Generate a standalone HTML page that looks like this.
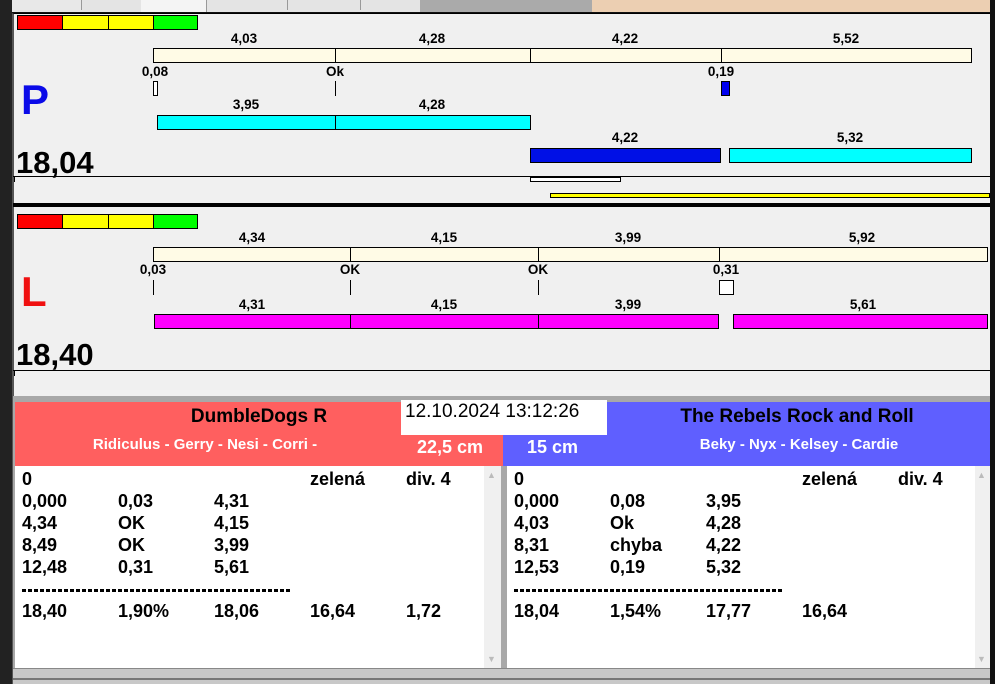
<!DOCTYPE html>
<html><head><meta charset="utf-8"><style>
*{margin:0;padding:0;box-sizing:border-box}
body{width:995px;height:684px;overflow:hidden;background:#111;font-family:"Liberation Sans",Arial,sans-serif;position:relative}
.a{position:absolute}
.t{position:absolute;font-weight:bold;font-size:13.5px;color:#000;transform:translateX(-50%);white-space:nowrap;line-height:14px}
.b{position:absolute;border:1px solid #000}
.r{position:absolute;font-weight:bold;font-size:18px;line-height:20px;color:#000;white-space:nowrap}
.d{position:absolute;height:3px;background:repeating-linear-gradient(90deg,#000 0 4px,transparent 4px 6px)}
</style></head><body>
<div class="a" style="left:0;top:0;width:12px;height:684px;background:#222"></div>
<div class="a" style="left:12px;top:0;width:408px;height:12px;background:#e4e4e4"></div>
<div class="a" style="left:12px;top:0;width:70px;height:10px;background:#e8e8e8;border-right:1px solid #999"></div>
<div class="a" style="left:141px;top:0;width:66px;height:12px;background:#f4f4f4;border-right:1px solid #999"></div>
<div class="a" style="left:287px;top:0;width:1px;height:10px;background:#999"></div>
<div class="a" style="left:360px;top:0;width:1px;height:10px;background:#999"></div>
<div class="a" style="left:420px;top:0;width:172px;height:12px;background:#aaa"></div>
<div class="a" style="left:592px;top:0;width:398px;height:12px;background:#eccfb2"></div>
<div class="a" style="left:990px;top:0;width:5px;height:684px;background:#111"></div>

<div class="a" style="left:12px;top:13px;width:978px;height:671px;background:#f0f0f0;border-left:2px solid #555;border-top:1px solid #000"></div>

<div class="b" style="left:17px;top:15px;width:46px;height:15px;background:#f00"></div>
<div class="b" style="left:62px;top:15px;width:47px;height:15px;background:#ff0"></div>
<div class="b" style="left:108px;top:15px;width:46px;height:15px;background:#ff0"></div>
<div class="b" style="left:153px;top:15px;width:45px;height:15px;background:#0f0"></div>

<div class="t" style="left:244px;top:32px">4,03</div>
<div class="t" style="left:432px;top:32px">4,28</div>
<div class="t" style="left:625px;top:32px">4,22</div>
<div class="t" style="left:846px;top:32px">5,52</div>
<div class="b" style="left:153px;top:48px;width:183px;height:15px;background:#fffbe6"></div>
<div class="b" style="left:335px;top:48px;width:196px;height:15px;background:#fffbe6"></div>
<div class="b" style="left:530px;top:48px;width:192px;height:15px;background:#fffbe6"></div>
<div class="b" style="left:721px;top:48px;width:251px;height:15px;background:#fffbe6"></div>
<div class="t" style="left:155px;top:65px">0,08</div>
<div class="t" style="left:335px;top:65px">Ok</div>
<div class="t" style="left:721px;top:65px">0,19</div>
<div class="b" style="left:153px;top:81px;width:5px;height:15px;background:#fff"></div>
<div class="a" style="left:335px;top:81px;width:1px;height:15px;background:#000"></div>
<div class="b" style="left:721px;top:81px;width:9px;height:15px;background:#0000f0"></div>
<div class="a" style="left:21px;top:78px;font-size:42px;font-weight:bold;color:#0a0ae8;line-height:44px">P</div>
<div class="t" style="left:246px;top:98px">3,95</div>
<div class="t" style="left:432px;top:98px">4,28</div>
<div class="b" style="left:157px;top:115px;width:179px;height:15px;background:#0ff"></div>
<div class="b" style="left:335px;top:115px;width:196px;height:15px;background:#0ff"></div>
<div class="t" style="left:625px;top:131px">4,22</div>
<div class="t" style="left:850px;top:131px">5,32</div>
<div class="b" style="left:530px;top:148px;width:191px;height:15px;background:#0010e6"></div>
<div class="b" style="left:729px;top:148px;width:243px;height:15px;background:#0ff"></div>
<div class="a" style="left:16px;top:146px;font-size:31px;font-weight:bold;line-height:34px">18,04</div>
<div class="a" style="left:13px;top:176px;width:977px;height:1px;background:#000"></div>
<div class="a" style="left:14px;top:176px;width:1px;height:6px;background:#000"></div>
<div class="b" style="left:530px;top:177px;width:91px;height:5px;background:#fff"></div>
<div class="b" style="left:550px;top:193px;width:440px;height:5px;background:#ff0"></div>
<div class="a" style="left:13px;top:203px;width:977px;height:4px;background:#000"></div>

<div class="b" style="left:17px;top:214px;width:46px;height:15px;background:#f00"></div>
<div class="b" style="left:62px;top:214px;width:47px;height:15px;background:#ff0"></div>
<div class="b" style="left:108px;top:214px;width:46px;height:15px;background:#ff0"></div>
<div class="b" style="left:153px;top:214px;width:45px;height:15px;background:#0f0"></div>
<div class="t" style="left:252px;top:231px">4,34</div>
<div class="t" style="left:444px;top:231px">4,15</div>
<div class="t" style="left:628px;top:231px">3,99</div>
<div class="t" style="left:862px;top:231px">5,92</div>
<div class="b" style="left:153px;top:247px;width:198px;height:15px;background:#fffbe6"></div>
<div class="b" style="left:350px;top:247px;width:189px;height:15px;background:#fffbe6"></div>
<div class="b" style="left:538px;top:247px;width:182px;height:15px;background:#fffbe6"></div>
<div class="b" style="left:719px;top:247px;width:269px;height:15px;background:#fffbe6"></div>
<div class="t" style="left:153px;top:263px">0,03</div>
<div class="t" style="left:350px;top:263px">OK</div>
<div class="t" style="left:538px;top:263px">OK</div>
<div class="t" style="left:726px;top:263px">0,31</div>
<div class="a" style="left:153px;top:280px;width:1px;height:15px;background:#000"></div>
<div class="a" style="left:350px;top:280px;width:1px;height:15px;background:#000"></div>
<div class="a" style="left:538px;top:280px;width:1px;height:15px;background:#000"></div>
<div class="b" style="left:719px;top:280px;width:15px;height:15px;background:#fff"></div>
<div class="a" style="left:21px;top:270px;font-size:42px;font-weight:bold;color:#f01010;line-height:44px">L</div>
<div class="t" style="left:252px;top:298px">4,31</div>
<div class="t" style="left:444px;top:298px">4,15</div>
<div class="t" style="left:628px;top:298px">3,99</div>
<div class="t" style="left:863px;top:298px">5,61</div>
<div class="b" style="left:154px;top:314px;width:197px;height:15px;background:#f0f"></div>
<div class="b" style="left:350px;top:314px;width:189px;height:15px;background:#f0f"></div>
<div class="b" style="left:538px;top:314px;width:181px;height:15px;background:#f0f"></div>
<div class="b" style="left:733px;top:314px;width:255px;height:15px;background:#f0f"></div>
<div class="a" style="left:16px;top:338px;font-size:31px;font-weight:bold;line-height:34px">18,40</div>
<div class="a" style="left:13px;top:370px;width:977px;height:1px;background:#000"></div>
<div class="a" style="left:14px;top:370px;width:1px;height:6px;background:#000"></div>

<div class="a" style="left:13px;top:396px;width:977px;height:288px;background:#a8a8a8"></div>
<div class="a" style="left:15px;top:402px;width:488px;height:64px;background:#ff5f5f"></div>
<div class="a" style="left:503px;top:402px;width:487px;height:64px;background:#5f5fff"></div>
<div class="a" style="left:401px;top:400px;width:206px;height:35px;background:#fff"></div>
<div class="a" style="left:405px;top:401px;font-size:19px;line-height:22px">12.10.2024 13:12:26</div>
<div class="t" style="left:259px;top:406px;font-size:19px;line-height:21px">DumbleDogs R</div>
<div class="t" style="left:205px;top:436px;font-size:15px;line-height:17px;color:#fff">Ridiculus - Gerry - Nesi - Corri -</div>
<div class="a" style="left:417px;top:437px;font-size:18px;font-weight:bold;color:#fff;line-height:20px">22,5 cm</div>
<div class="a" style="left:527px;top:437px;font-size:18px;font-weight:bold;color:#fff;line-height:20px">15 cm</div>
<div class="t" style="left:797px;top:406px;font-size:19px;line-height:21px">The Rebels Rock and Roll</div>
<div class="t" style="left:799px;top:436px;font-size:15px;line-height:17px;color:#fff">Beky - Nyx - Kelsey - Cardie</div>

<div class="a" style="left:15px;top:466px;width:470px;height:202px;background:#fff"></div>
<div class="a" style="left:484px;top:466px;width:17px;height:202px;background:#f0f0f0"></div>
<div class="a" style="left:487px;top:470px;font-size:9px;color:#bbb">▲</div>
<div class="a" style="left:487px;top:654px;font-size:9px;color:#bbb">▼</div>
<div class="a" style="left:507px;top:466px;width:469px;height:202px;background:#fff"></div>
<div class="a" style="left:975px;top:466px;width:15px;height:202px;background:#f0f0f0"></div>
<div class="a" style="left:977px;top:470px;font-size:9px;color:#bbb">▲</div>
<div class="a" style="left:977px;top:654px;font-size:9px;color:#bbb">▼</div>

<div class="r" style="left:22px;top:469px">0</div><div class="r" style="left:310px;top:469px">zelená</div><div class="r" style="left:406px;top:469px">div. 4</div>
<div class="r" style="left:22px;top:491px">0,000</div><div class="r" style="left:118px;top:491px">0,03</div><div class="r" style="left:214px;top:491px">4,31</div>
<div class="r" style="left:22px;top:513px">4,34</div><div class="r" style="left:118px;top:513px">OK</div><div class="r" style="left:214px;top:513px">4,15</div>
<div class="r" style="left:22px;top:535px">8,49</div><div class="r" style="left:118px;top:535px">OK</div><div class="r" style="left:214px;top:535px">3,99</div>
<div class="r" style="left:22px;top:557px">12,48</div><div class="r" style="left:118px;top:557px">0,31</div><div class="r" style="left:214px;top:557px">5,61</div>
<div class="d" style="left:22px;top:589px;width:270px"></div>
<div class="r" style="left:22px;top:601px">18,40</div><div class="r" style="left:118px;top:601px">1,90%</div><div class="r" style="left:214px;top:601px">18,06</div><div class="r" style="left:310px;top:601px">16,64</div><div class="r" style="left:406px;top:601px">1,72</div>

<div class="r" style="left:514px;top:469px">0</div><div class="r" style="left:802px;top:469px">zelená</div><div class="r" style="left:898px;top:469px">div. 4</div>
<div class="r" style="left:514px;top:491px">0,000</div><div class="r" style="left:610px;top:491px">0,08</div><div class="r" style="left:706px;top:491px">3,95</div>
<div class="r" style="left:514px;top:513px">4,03</div><div class="r" style="left:610px;top:513px">Ok</div><div class="r" style="left:706px;top:513px">4,28</div>
<div class="r" style="left:514px;top:535px">8,31</div><div class="r" style="left:610px;top:535px">chyba</div><div class="r" style="left:706px;top:535px">4,22</div>
<div class="r" style="left:514px;top:557px">12,53</div><div class="r" style="left:610px;top:557px">0,19</div><div class="r" style="left:706px;top:557px">5,32</div>
<div class="d" style="left:514px;top:589px;width:270px"></div>
<div class="r" style="left:514px;top:601px">18,04</div><div class="r" style="left:610px;top:601px">1,54%</div><div class="r" style="left:706px;top:601px">17,77</div><div class="r" style="left:802px;top:601px">16,64</div>

<div class="a" style="left:13px;top:668px;width:977px;height:16px;background:#c8c8c8;border-top:1px solid #888"></div>
<div class="a" style="left:13px;top:678px;width:977px;height:2px;background:#777"></div>
</body></html>
